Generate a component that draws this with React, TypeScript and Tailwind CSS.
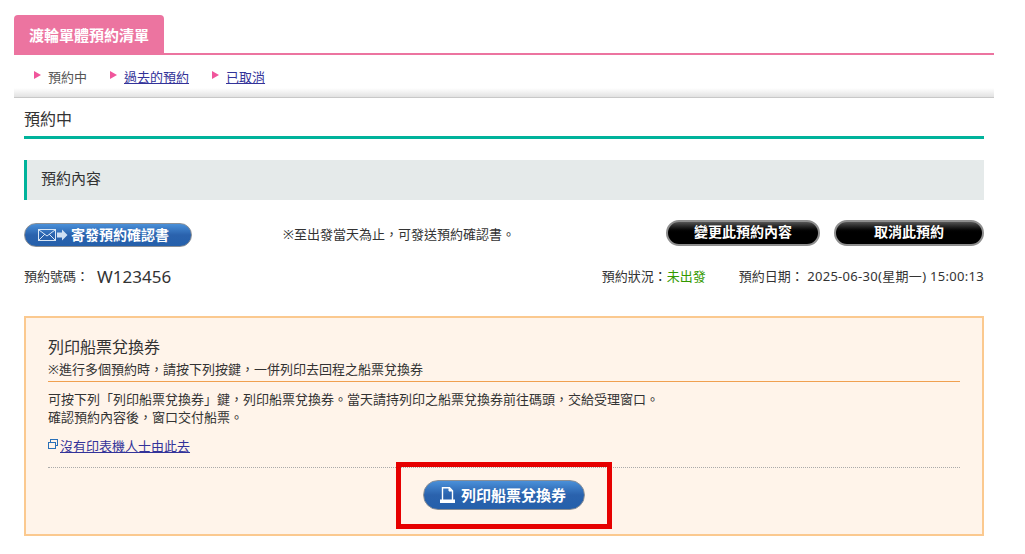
const FONT = "font-['Noto_Sans','Noto_Sans_CJK_TC',sans-serif]";

function Arrow() {
  return (
    <svg width="7" height="8" viewBox="0 0 7 8" className="mr-[7px] mb-[4px] shrink-0">
      <polygon points="0,0 7,4 0,8" fill="#f0559b" />
    </svg>
  );
}

function MailIcon() {
  return (
    <svg width="32" height="14" viewBox="0 0 32 14" className="shrink-0">
      <rect x="0.500" y="1.500" width="17" height="11" fill="none" stroke="#d8e6f5" strokeWidth="1" />
      <path d="M1 2l8 6 8-6M1 12l6-6M17 12l-6-6" fill="none" stroke="#d8e6f5" strokeWidth="1" />
      <path d="M19 4.500h5V1.500l5.500 5.500-5.500 5.500v-3h-5z" fill="#cfe0f3" />
    </svg>
  );
}

function PrintIcon() {
  return (
    <svg width="15" height="16" viewBox="0 0 15 16" className="shrink-0">
      <path d="M2.500 13V0.700h7L12.500 3.700V13" fill="none" stroke="#fff" strokeWidth="1.400" />
      <path d="M9 1v3h3.500" fill="#fff" stroke="#fff" />
      <rect x="0" y="12.500" width="15" height="3.500" fill="#fff" />
    </svg>
  );
}

export default function App() {
  return (
    <div lang="zh-TW" className={`${FONT} w-[1025px] h-[554px] overflow-hidden bg-white pt-[15px] pl-[14px] text-[#333]`}>
      <div className="w-[980px]">
        {/* 分頁 */}
        <div className="border-b-2 border-[#ec74a0] h-[40px]">
          <div className="w-[150px] h-[40px] rounded-t-[4px] bg-[#ec74a0] text-white font-bold text-[15px] leading-[40px] text-center">
            渡輪單體預約清單
          </div>
        </div>
        <div className="flex items-center h-[33px] pl-[20px] pt-[10px] text-[13px] leading-[20px]">
          <Arrow />
          <span className="mr-[23px] text-[#555]">預約中</span>
          <Arrow />
          <a className="mr-[23px] underline text-[#333399]">過去的預約</a>
          <Arrow />
          <a className="underline text-[#333399]">已取消</a>
        </div>
        <div className="h-[10px] bg-gradient-to-b from-white to-[#e2e2e2] border-b border-[#c8c8c8]" />

        <div className="px-[10px]">
          <div className="h-[41px] border-b-[3px] border-[#00b39b] pt-[9px] text-[16px] leading-[25px] text-[#333]">
            預約中
          </div>

          <div className="mt-[21px] h-[40px] bg-[#e5eaea] border-l-[3px] border-[#00b39b] pl-[14px] text-[15px] leading-[37px]">
            預約內容
          </div>

          <div className="mt-[20px] flex items-start h-[27px]">
            <div className="mt-[3px] w-[168px] h-[24px] rounded-full border border-[#8a8f96] bg-gradient-to-b from-[#4a90d9] via-[#2a62ad] to-[#2560ab] flex items-center pl-[13px] pb-[1px] text-white font-bold text-[14px] leading-none">
              <MailIcon />
              <span className="ml-[1px]">寄發預約確認書</span>
            </div>
            <span className="mt-[3px] ml-[91px] text-[13px] leading-[22px] w-[383px]">※至出發當天為止，可發送預約確認書。</span>
            <div className="w-[154px] h-[26px] rounded-full border-2 border-[#8e8e8e] bg-gradient-to-b from-[#555] via-black to-black text-white font-bold text-[14px] leading-[20px] text-center">
              變更此預約內容
            </div>
            <div className="ml-[14px] w-[150px] h-[26px] rounded-full border-2 border-[#8e8e8e] bg-gradient-to-b from-[#555] via-black to-black text-white font-bold text-[14px] leading-[20px] text-center">
              取消此預約
            </div>
          </div>

          <div className="mt-[18px] flex items-center h-[24px] text-[13px]">
            <span className="mr-[8px]">預約號碼：</span>
            <span className="text-[17px] text-[#333]">W123456</span>
            <span className="ml-auto">預約狀況：</span>
            <span className="text-[#339900]">未出發</span>
            <span className="ml-[33px]">
              預約日期：&nbsp;<span className="tracking-[0.3px]">2025-06-30(星期一) 15:00:13</span>
            </span>
          </div>

          <div className="relative mt-[27px] h-[220px] border-2 border-[#fbc98f] bg-[#fff4ea] px-[22px] pt-[17px]">
            <div className="text-[16px] leading-[24px]">列印船票兌換券</div>
            <div className="text-[13px] leading-[20px] border-b border-[#f0a050] pb-[2px]">
              ※進行多個預約時，請按下列按鍵，一併列印去回程之船票兌換券
            </div>
            <div className="mt-[8px] text-[13px] leading-[18px]">
              可按下列「列印船票兌換券」鍵，列印船票兌換券。當天請持列印之船票兌換券前往碼頭，交給受理窗口。
              <br />
              確認預約內容後，窗口交付船票。
            </div>
            <div className="mt-[10px] h-[32px] flex items-start text-[13px] leading-[20px] border-b border-dotted border-[#aaa]">
              <svg width="10" height="10" viewBox="0 0 10 10" className="mt-[3px] mr-[2px] shrink-0">
                <rect x="2.500" y="0.500" width="7" height="6" fill="none" stroke="#2a70b8" />
                <rect x="0.500" y="3.500" width="7" height="6" fill="#fff4ea" stroke="#2a70b8" />
              </svg>
              <a className="underline text-[#333399]">沒有印表機人士由此去</a>
            </div>
            <div className="mt-[12px] flex justify-center">
              <div className="w-[162px] h-[30px] rounded-full border border-[#8a8f96] bg-gradient-to-b from-[#4a90d9] via-[#2a62ad] to-[#2560ab] flex items-center justify-center gap-[6px] pr-[2px] text-white font-bold text-[15px]">
                <PrintIcon />
                <span>列印船票兌換券</span>
              </div>
            </div>
            {/* 紅框標示 */}
            <div className="absolute left-[370px] top-[144px] w-[216px] h-[67px] border-[5px] border-[#e60000]" />
          </div>
        </div>
      </div>
    </div>
  );
}
